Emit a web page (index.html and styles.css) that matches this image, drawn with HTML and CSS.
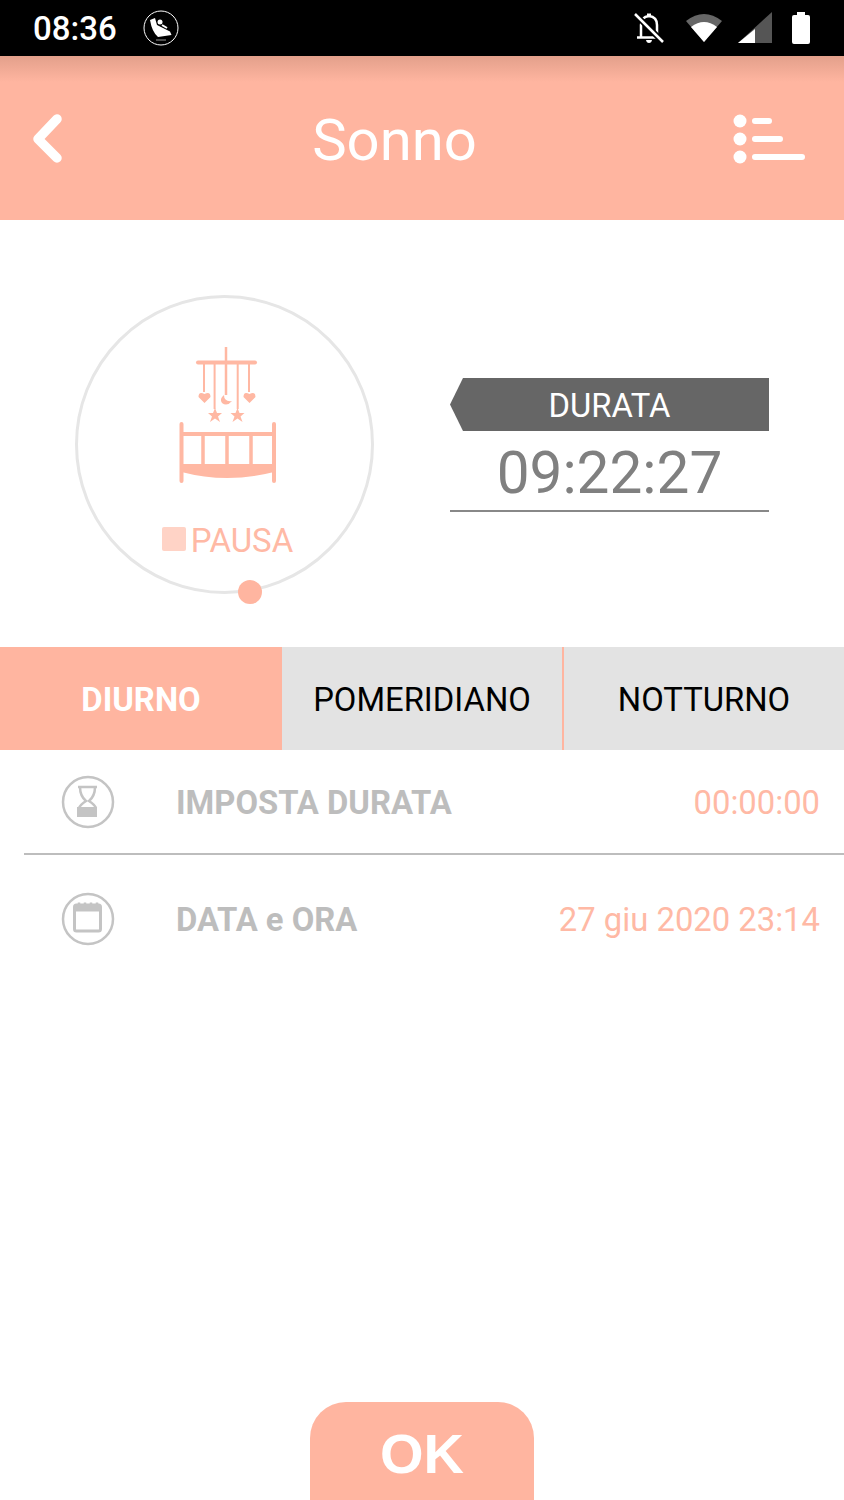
FILE: index.html
```html
<!DOCTYPE html>
<html>

<head>
	<meta charset="utf-8">
	<title>Sonno</title>
	<link rel="stylesheet" href="styles.css">
</head>

<body>
	<div class="statusBar">
		<span class="clock">08:36</span>
		<svg class="seatIcon" width="36" height="36" viewBox="0 0 36 36">
			<circle cx="18" cy="18" r="17" fill="none" stroke="#fff" stroke-width="1"/>
			<path d="M7 10 L12 8 L14 15 L20 18 L27 21.500 L28.500 25 L15 27 Q9 22 7 10 Z" fill="#fff"/>
			<circle cx="17" cy="12" r="2.500" fill="#fff"/>
			<path d="M19 15 L24 18" stroke="#fff" stroke-width="2"/>
			<path d="M13 30 H23" stroke="#999" stroke-width="1"/>
		</svg>
		<div class="statusRight">
			<svg class="bellIcon" width="30" height="32" viewBox="0 0 30 32">
				<path d="M7 25 V13 Q7 5 15 4 Q23 5 23 13 V25" fill="none" stroke="#fff" stroke-width="2.500"/>
				<path d="M13 4 V1.500 H17 V4 Z" fill="#fff"/>
				<path d="M3 25.500 H27" stroke="#fff" stroke-width="2.500"/>
				<path d="M12 28 H18 Q17.500 31 15 31 Q12.500 31 12 28 Z" fill="#fff"/>
				<path d="M1 2 L29 30" stroke="#000" stroke-width="6"/>
				<path d="M1 2 L29 30" stroke="#fff" stroke-width="2.500"/>
			</svg>
			<svg class="wifiIcon" width="36" height="30" viewBox="0 0 36 30">
				<path d="M0 8 Q18 -6 36 8 L18 29 Z" fill="#666"/>
				<path d="M5 14 Q18 4 31 14 L18 29 Z" fill="#fff"/>
			</svg>
			<svg class="signalIcon" width="34" height="32" viewBox="0 0 34 32">
				<path d="M34 0 V31 H0 Z" fill="#555"/>
				<path d="M17 17 V31 H0 Z" fill="#fff"/>
			</svg>
			<svg class="batteryIcon" width="18" height="32" viewBox="0 0 18 32">
				<path d="M5 0 H13 V3 H16 Q18 3 18 5 V30 Q18 32 16 32 H2 Q0 32 0 30 V5 Q0 3 2 3 H5 Z" fill="#fff"/>
			</svg>
		</div>
	</div>

	<div class="topBar">
		<svg class="backIcon" width="32" height="50" viewBox="0 0 32 50">
			<path d="M26 5 L7 25 L26 44" fill="none" stroke="#fff" stroke-width="9.500" stroke-linecap="round" stroke-linejoin="round"/>
		</svg>
		<div class="title">Sonno</div>
		<svg class="listIcon" width="72" height="50" viewBox="0 0 72 50">
			<circle cx="7" cy="7" r="6.500" fill="#fff"/>
			<circle cx="7" cy="25" r="6.500" fill="#fff"/>
			<circle cx="7" cy="43" r="6.500" fill="#fff"/>
			<path d="M22 7 H36 M22 25 H47 M22 43 H69" stroke="#fff" stroke-width="6" stroke-linecap="round"/>
		</svg>
	</div>

	<div class="hero">
		<div class="dial">
			<svg class="crib" width="102" height="138" viewBox="-1 0 102 138">
				<g fill="none" stroke="#ffb8a3">
					<path d="M51 0 V48" stroke-width="2.500"/>
					<path d="M23 15.500 H80" stroke-width="4" stroke-linecap="round"/>
					<path d="M29 15 V45 M39.600 15 V62 M62.700 15 V62 M74 15 V45" stroke-width="2"/>
					<path d="M6.500 77 V134 M99 77 V134" stroke-width="4" stroke-linecap="round"/>
					<path d="M6.500 87 H99" stroke-width="4"/>
					<path d="M28 87 V120 M52 87 V120 M76 87 V120" stroke-width="3.500"/>
				</g>
				<g fill="#ffb8a3">
					<path d="M6.500 117 H99 V125 Q52 137 6.500 125 Z"/>
					<path d="M29.500 56 L23.500 50 Q23.500 44 29.500 47 Q35.500 44 35.500 50 Z"/>
					<path d="M74.500 56 L68.500 50 Q68.500 44 74.500 47 Q80.500 44 80.500 50 Z"/>
					<path d="M49 48 Q49 55 57 54 Q52 60 47 56 Q44 52 49 48 Z"/>
					<path d="M40 61 L42 66 L47 66 L43 69.500 L45 75 L40 71.500 L35 75 L37 69.500 L33 66 L38 66 Z"/>
					<path d="M62.500 61 L64.500 66 L69.500 66 L65.500 69.500 L67.500 75 L62.500 71.500 L57.500 75 L59.500 69.500 L55.500 66 L60.500 66 Z"/>
				</g>
			</svg>
			<div class="pause">
				<span class="pauseBox"></span>
				<span class="pauseText">PAUSA</span>
			</div>
			<span class="dialDot"></span>
		</div>
		<div class="duration">
			<div class="durationLabel">DURATA</div>
			<div class="durationTime">09:22:27</div>
		</div>
	</div>

	<div class="tabs">
		<div class="tab tabActive">DIURNO</div>
		<div class="tab tabMiddle">POMERIDIANO</div>
		<div class="tab tabLast">NOTTURNO</div>
	</div>

	<div class="row rowLine">
		<span class="rowIcon">
			<svg width="54" height="54" viewBox="0 0 54 54">
				<circle cx="27" cy="27" r="25" fill="none" stroke="#c4c4c4" stroke-width="2.500"/>
				<path d="M17 12 H36 M19 12 Q19 21 25 26 Q19 30 18 33 M34 12 Q34 21 28 26 Q34 30 35 33" fill="none" stroke="#c4c4c4" stroke-width="2.500"/>
				<path d="M16 32 H36 V42 H16 Z" fill="#c4c4c4"/>
			</svg>
		</span>
		<span class="rowLabel">IMPOSTA DURATA</span>
		<span class="rowValue">00:00:00</span>
	</div>
	<div class="row rowDate">
		<span class="rowIcon">
			<svg width="54" height="54" viewBox="0 0 54 54">
				<circle cx="27" cy="27" r="25" fill="none" stroke="#c4c4c4" stroke-width="2.500"/>
				<rect x="13.500" y="13" width="26" height="26" rx="2" fill="none" stroke="#c4c4c4" stroke-width="3"/>
				<path d="M13 16.500 H40" stroke="#c4c4c4" stroke-width="6"/>
				<path d="M18 10.500 V16 M24 10.500 V16 M30 10.500 V16 M36 10.500 V16" stroke="#c4c4c4" stroke-width="2.500"/>
			</svg>
		</span>
		<span class="rowLabel">DATA e ORA</span>
		<span class="rowValue">27 giu 2020 23:14</span>
	</div>

	<div class="footer">
		<div class="okButton">OK</div>
	</div>
</body>

</html>
```
FILE: styles.css
```css
html, body {
	margin: 0;
	padding: 0;
	background-color: white;
}

body {
	width: 844px;
	height: 1500px;
	overflow: hidden;
	display: flex;
	flex-direction: column;
	font-family: Roboto, "Noto Sans", sans-serif;
}

.statusBar {
	height: 56px;
	flex: none;
	background-color: black;
	color: white;
	display: flex;
	align-items: center;
	padding: 0 34px 0 33px;
	box-sizing: border-box;
}

.clock {
	font-size: 33px;
	font-weight: 500;
}

.seatIcon {
	margin-left: 26px;
}

.statusRight {
	margin-left: auto;
	display: flex;
	align-items: center;
}

.wifiIcon {
	margin-left: 22px;
}

.signalIcon {
	margin-left: 16px;
}

.batteryIcon {
	margin-left: 20px;
}

.topBar {
	height: 164px;
	flex: none;
	background: linear-gradient(#e3a08b, #ffb5a0 26px);
	display: flex;
	align-items: center;
	justify-content: space-between;
	padding: 0 39px 0 31px;
	box-sizing: border-box;
}

.backIcon {
	margin-top: 2px;
}

.title {
	font-size: 58px;
	color: white;
	margin-top: 4px;
	margin-right: 7px;
}

.listIcon {
	margin-top: 2px;
}

.hero {
	height: 427px;
	flex: none;
	display: flex;
	align-items: flex-start;
	padding-left: 75px;
	padding-top: 75px;
	box-sizing: border-box;
}

.dial {
	width: 299px;
	height: 299px;
	box-sizing: border-box;
	border: 3px solid #e6e6e6;
	border-radius: 50%;
	position: relative;
	display: flex;
	flex-direction: column;
	align-items: center;
	padding-top: 49px;
}

.crib {
	display: block;
}

.dialDot {
	position: absolute;
	left: 160px;
	top: 282px;
	width: 24px;
	height: 24px;
	border-radius: 50%;
	background-color: #ffb5a0;
}

.pause {
	display: flex;
	align-items: center;
	gap: 5px;
	margin-top: 32px;
	margin-left: 6px;
	font-size: 33px;
	color: #ffb9a5;
}

.pauseBox {
	width: 24px;
	height: 24px;
	border-radius: 2px;
	background-color: #ffd3c6;
}

.pauseText {
	padding-top: 4px;
}

.duration {
	width: 319px;
	margin-left: 76px;
	margin-top: 83px;
	border-bottom: 2px solid #888;
}

.durationLabel {
	height: 53px;
	line-height: 56px;
	background-color: #666;
	color: white;
	font-size: 32.800px;
	text-align: center;
	clip-path: polygon(13px 0, 100% 0, 100% 100%, 13px 100%, 0 50%);
}

.durationTime {
	height: 79px;
	line-height: 85px;
	font-size: 58.500px;
	color: #808080;
	text-align: center;
}

.tabs {
	height: 103px;
	flex: none;
	display: flex;
	background-color: #e3e3e3;
}

.tab {
	display: flex;
	align-items: center;
	justify-content: center;
	box-sizing: border-box;
	width: 282px;
	padding-top: 2px;
	font-size: 32.800px;
	color: black;
}

.tabActive {
	background-color: #ffb5a0;
	color: white;
	font-weight: 700;
}

.tabMiddle {
	width: 280px;
}

.tabLast {
	border-left: 2px solid #ffb5a0;
}

.row {
	height: 105px;
	flex: none;
	margin-left: 24px;
	padding-right: 24px;
	display: flex;
	align-items: center;
	box-sizing: border-box;
}

.rowLine {
	border-bottom: 2px solid #bdbdbd;
}

.rowDate {
	height: 128px;
}

.rowIcon {
	width: 54px;
	height: 54px;
	margin-left: 37px;
	margin-right: 61px;
	flex: none;
}

.rowIcon svg {
	display: block;
}

.rowLabel {
	padding-top: 2px;
	font-size: 32.800px;
	font-weight: 700;
	color: #bdbdbd;
}

.rowValue {
	margin-left: auto;
	padding-top: 2px;
	font-size: 32.800px;
	color: #ffb9a5;
}

.footer {
	margin-top: auto;
	display: flex;
	justify-content: center;
}

.okButton {
	width: 224px;
	height: 98px;
	background-color: #ffb5a0;
	color: white;
	border-radius: 36px 36px 0 0;
	font-family: "Liberation Sans", Arial, sans-serif;
	font-size: 56px;
	font-weight: 700;
	text-align: center;
	line-height: 103px;
}
```
